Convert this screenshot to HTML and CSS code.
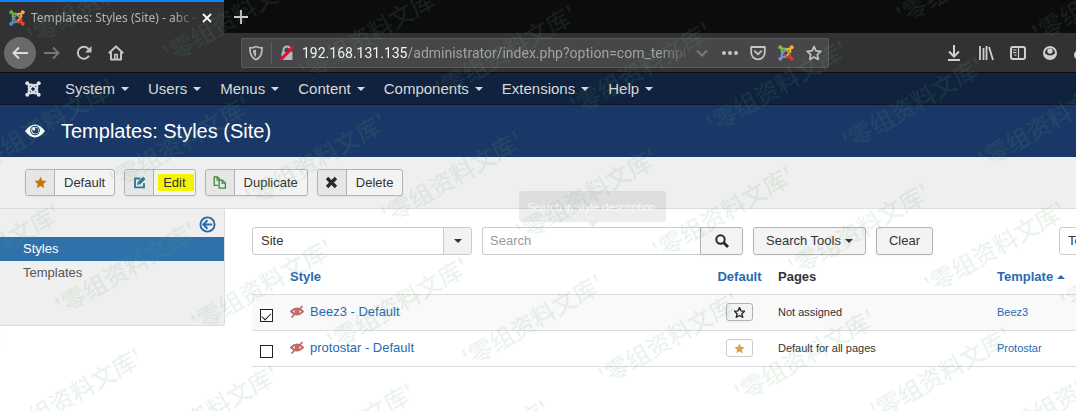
FILE: index.html
```html
<!DOCTYPE html>
<html lang="en">
<head>
<meta charset="utf-8">
<meta name="viewport" content="width=device-width, initial-scale=1">
<title>Templates: Styles (Site) - abc - Administration</title>
<link rel="stylesheet" href="styles.css">
</head>
<body>
<svg class="defs" aria-hidden="true">
  <defs>
    <g id="knot-arm">
      <circle cx="2.3" cy="2.3" r="2" fill="currentColor"/>
      <path d="M2.500 2.500L4.200 4.200Q6.300 2.800 8.200 4.700L11.400 7.900M4.200 4.200Q2.900 6.200 4.700 8.200" fill="none" stroke="currentColor" stroke-width="2"/>
    </g>
    <g id="star-shape">
      <path d="M8 .8l2.2 4.8 5.2.6-3.9 3.5 1.1 5.2L8 12.3l-4.6 2.6 1.1-5.2L.6 6.2l5.2-.6z"/>
    </g>
    <g id="eye-off" fill="none" stroke="#bd6a66" stroke-width="1.8">
      <path d="M1 6.500Q7 .5 13 6.500Q7 12.500 1 6.500z"/>
      <circle cx="7" cy="6.500" r="1.600"/>
      <path d="M1.500 12.500L12.500 1"/>
    </g>
    <text id="mark" class="mark-text" transform="rotate(-30)">'零组资料文库'</text>
    <g id="mark-row">
      <use href="#mark" x="-136" y="-18"/><use href="#mark"/><use href="#mark" x="136" y="18"/><use href="#mark" x="272" y="35"/><use href="#mark" x="408" y="53"/><use href="#mark" x="543" y="70"/><use href="#mark" x="679" y="88"/><use href="#mark" x="815" y="105"/><use href="#mark" x="951" y="123"/><use href="#mark" x="1087" y="140"/><use href="#mark" x="1223" y="158"/>
    </g>
  </defs>
</svg>

<header class="browser">
  <div class="tabs">
    <div class="tab">
      <svg class="i16" viewBox="0 0 16 16" aria-hidden="true">
        <g color="#6db33f"><use href="#knot-arm"/></g><g color="#f9a541" transform="rotate(90 8 8)"><use href="#knot-arm"/></g><g color="#f44321" transform="rotate(180 8 8)"><use href="#knot-arm"/></g><g color="#5091cd" transform="rotate(270 8 8)"><use href="#knot-arm"/></g>
      </svg>
      <span class="tab-title">Templates: Styles (Site) - abc -</span>
      <button class="plain tab-close" aria-label="Close tab"><svg class="i16" viewBox="0 0 16 16"><path d="M4 4l8 8M12 4l-8 8" stroke="#fff" stroke-width="1.8"/></svg></button>
    </div>
    <button class="plain new-tab" aria-label="New tab"><svg class="i16" viewBox="0 0 16 16"><path d="M8 1v14M1 8h14" stroke="#d0d0d0" stroke-width="1.8"/></svg></button>
  </div>
  <div class="navbar">
    <div class="nav-buttons">
      <button class="plain back" aria-label="Back"><svg class="i16" viewBox="0 0 16 16"><path d="M16 8H1.5M7 2.5L1.5 8 7 13.5" fill="none" stroke="#ddd" stroke-width="2"/></svg></button>
      <button class="plain tool" aria-label="Forward"><svg class="i16" viewBox="0 0 16 16"><path d="M0 8h14.5M9 2.5L14.5 8 9 13.5" fill="none" stroke="#77777a" stroke-width="2"/></svg></button>
      <button class="plain tool" aria-label="Reload"><svg class="i16" viewBox="0 0 16 16"><path d="M13 10.8A6 6 0 1 1 12.5 4" fill="none" stroke="#c4c4c4" stroke-width="2"/><path d="M15.5 1v6.5H9z" fill="#c4c4c4"/></svg></button>
      <button class="plain tool" aria-label="Home"><svg class="i16" viewBox="0 0 16 16"><path d="M.8 8.2L8 1.4l7.2 6.8M3 7v7.6h10V7" fill="none" stroke="#c4c4c4" stroke-width="2" stroke-linejoin="round"/><path d="M6.8 15V9.5h2.4V15" fill="none" stroke="#c4c4c4" stroke-width="1.6"/></svg></button>
    </div>
    <div class="space"></div>
    <div class="urlbar">
      <svg class="i16" viewBox="0 0 16 16" aria-hidden="true"><path d="M8 1.5Q11 3 14 2.8C14.3 8.5 12.5 12.8 8 14.8 3.500 12.800 1.700 8.500 2 2.800Q5 3 8 1.500z" fill="none" stroke="#b8b8ba" stroke-width="1.8"/><path d="M8 4.500v7.500Q5 10 5 5.200Q6.500 5 8 4.500z" fill="#b8b8ba"/></svg>
      <span class="url-rule"></span>
      <svg class="i16" viewBox="0 0 16 16" aria-hidden="true"><path d="M4.500 8V5a3.500 3.500 0 0 1 7 0v3" fill="none" stroke="#b8b8ba" stroke-width="2"/><rect x="2.500" y="7" width="11" height="8" rx="1.200" fill="#b8b8ba"/><path d="M1 15.500L14.500 1.500" stroke="#48484a" stroke-width="3"/><path d="M1.500 14.800L14.500 1.200" stroke="#ff0039" stroke-width="2"/></svg>
      <span class="url"><span class="host">192.168.131.135</span>/administrator/index.php?option=com_templ</span>
      <svg class="i16 chevron" viewBox="0 0 16 16" aria-hidden="true"><path d="M3 5.500l5 5 5-5" fill="none" stroke="#7c7c7e" stroke-width="2"/></svg>
      <svg class="i16" viewBox="0 0 16 16" aria-hidden="true" fill="#c4c4c6"><circle cx="2" cy="8" r="2"/><circle cx="8" cy="8" r="2"/><circle cx="14" cy="8" r="2"/></svg>
      <svg class="i16" viewBox="0 0 16 16" aria-hidden="true" fill="none" stroke="#c4c4c6" stroke-width="1.800" stroke-linejoin="round" stroke-linecap="round"><path d="M1.200 2h13.600v5.500a6.800 6.800 0 0 1-13.600 0z"/><path d="M4.800 6.200L8 9.300l3.200-3.100"/></svg>
      <svg class="i16" viewBox="0 0 16 16" aria-hidden="true">
        <g color="#7ac143"><use href="#knot-arm"/></g><g color="#f5b335" transform="rotate(90 8 8)"><use href="#knot-arm"/></g><g color="#d93a2f" transform="rotate(180 8 8)"><use href="#knot-arm"/></g><g color="#7a8fd0" transform="rotate(270 8 8)"><use href="#knot-arm"/></g>
      </svg>
      <svg class="i16" viewBox="0 0 16 16" aria-hidden="true"><path d="M8 1.500l2 4.300 4.800.6-3.500 3.300.9 4.700L8 12.100l-4.200 2.300.9-4.700L1.200 6.400 6 5.800z" fill="none" stroke="#c4c4c6" stroke-width="1.700" stroke-linejoin="round"/></svg>
    </div>
    <div class="space"></div>
    <div class="actions">
      <button class="plain tool" aria-label="Downloads"><svg class="i16" viewBox="0 0 16 16"><path d="M8 0v11M3 6.500l5 5 5-5M2 15h12" fill="none" stroke="#cfcfcf" stroke-width="2"/></svg></button>
      <button class="plain tool" aria-label="Library"><svg class="i16" viewBox="0 0 16 16"><path d="M2 1v14M5.500 3v12M8.500 1v14M11 2l4 13" fill="none" stroke="#cfcfcf" stroke-width="1.800"/></svg></button>
      <button class="plain tool" aria-label="Sidebars"><svg class="i16" viewBox="0 0 16 16"><rect x="1" y="2" width="14" height="12" rx="2" fill="none" stroke="#cfcfcf" stroke-width="2"/><path d="M8.500 2v12M3 5h3.500M3 7.500h3.500M4 10h2.500" stroke="#cfcfcf" stroke-width="1.200"/></svg></button>
      <button class="plain tool" aria-label="Account"><svg class="i16" viewBox="0 0 16 16"><circle cx="8" cy="8" r="6" fill="none" stroke="#cfcfcf" stroke-width="2"/><circle cx="8" cy="6" r="2.700" fill="#cfcfcf"/><path d="M3 8.500q5 4 10 0v3q-5 4.500-10 0z" fill="#cfcfcf"/></svg></button>
      <button class="plain tool" aria-label="Extension"><svg class="i16" viewBox="0 0 16 16"><circle cx="5" cy="10" r="5" fill="#cfcfcf"/></svg></button>
    </div>
  </div>
</header>

<nav class="menu">
  <a class="brand" href="#" aria-label="Control panel"><svg class="i16" viewBox="0 0 16 16" color="#dcdfe4"><use href="#knot-arm"/><use href="#knot-arm" transform="rotate(90 8 8)"/><use href="#knot-arm" transform="rotate(180 8 8)"/><use href="#knot-arm" transform="rotate(270 8 8)"/></svg></a>
  <a href="#">System</a><a href="#">Users</a><a href="#">Menus</a><a href="#">Content</a><a href="#">Components</a><a href="#">Extensions</a><a href="#">Help</a>
</nav>

<div class="title-bar">
  <svg class="eye" viewBox="0 0 20 14" aria-hidden="true"><path d="M0 7Q10-6 20 7Q10 20 0 7z" fill="#fff"/><circle cx="10" cy="6.500" r="4.800" fill="#1a3867"/><circle cx="10" cy="6.500" r="3.800" fill="#fff"/><circle cx="10.300" cy="6.500" r="3.100" fill="#1a3867"/><circle cx="8.800" cy="5" r="1.500" fill="#fff"/></svg>
  <h1>Templates: Styles (Site)</h1>
</div>

<div class="toolbar">
  <button class="task"><span class="task-icon"><svg viewBox="0 0 16 16" fill="#c67605"><use href="#star-shape"/></svg></span><span class="task-label">Default</span></button>
  <button class="task"><span class="task-icon"><svg viewBox="0 0 16 16"><path d="M9 3H2.500v11h11V9" fill="none" stroke="#2f7d92" stroke-width="2.400"/><path d="M5 11l1-4L12.500.8l3 3L9 10z" fill="#2f7d92"/></svg></span><span class="task-label"><span class="highlight">Edit</span></span></button>
  <button class="task"><span class="task-icon"><svg viewBox="0 0 16 16" fill="none" stroke="#3d8b40" stroke-width="1.600"><path d="M6 11.500H1.500V1.200h4L9 4.500"/><path d="M5.200 1.500V5H8.500"/><path d="M7.500 5h4l3.700 3.500V15H7.500z"/><path d="M11.200 5v3.700H15"/></svg></span><span class="task-label">Duplicate</span></button>
  <button class="task"><span class="task-icon"><svg viewBox="0 0 16 16"><path d="M2.500 2.500l11 11M13.500 2.500l-11 11" stroke="#292929" stroke-width="4.200"/></svg></span><span class="task-label">Delete</span></button>
</div>

<div class="body">
  <aside class="sidebar">
    <button class="plain collapse" aria-label="Hide the sidebar"><svg viewBox="0 0 18 18" fill="none" stroke="#2c6ba6" stroke-width="2"><circle cx="9" cy="9" r="7.500"/><path d="M14 9H5M9 4.500L4.500 9 9 13.500"/></svg></button>
    <a class="side-link active" href="#">Styles</a>
    <a class="side-link" href="#">Templates</a>
  </aside>
  <main class="content">
    <div class="filters">
      <span class="picker"><select aria-label="Client"><option>Site</option><option>Administrator</option></select></span>
      <div class="search">
        <input type="text" placeholder="Search" aria-label="Search">
        <button class="btn search-go" aria-label="Search"><svg viewBox="0 0 14 14" fill="none" stroke="#292929"><circle cx="5.500" cy="5.500" r="4.200" stroke-width="2"/><path d="M8.500 8.500L13 13" stroke-width="2.800"/></svg></button>
        <div class="tooltip" role="tooltip">Search in style description.</div>
      </div>
      <button class="btn tools">Search Tools</button>
      <button class="btn">Clear</button>
      <span class="picker ordering"><select aria-label="Sort by"><option>Template ascending</option></select></span>
    </div>
    <table>
      <colgroup><col class="c-check"><col><col class="c-default"><col class="c-pages"><col class="c-template"></colgroup>
      <thead>
        <tr><th></th><th><a href="#">Style</a></th><th class="center"><a href="#">Default</a></th><th>Pages</th><th><a class="sorted" href="#">Template</a></th></tr>
      </thead>
      <tbody>
        <tr class="odd"><td><input type="checkbox" checked aria-label="Select Beez3"></td><td><span class="style-name"><svg viewBox="0 0 14 14" aria-hidden="true"><use href="#eye-off"/></svg><a href="#">Beez3 - Default</a></span></td><td class="center"><button class="btn micro" aria-label="Set default"><svg viewBox="0 0 16 16" fill="none" stroke="#292929" stroke-width="2"><use href="#star-shape"/></svg></button></td><td class="small">Not assigned</td><td class="small"><a href="#">Beez3</a></td></tr>
        <tr><td><input type="checkbox" aria-label="Select protostar"></td><td><span class="style-name"><svg viewBox="0 0 14 14" aria-hidden="true"><use href="#eye-off"/></svg><a href="#">protostar - Default</a></span></td><td class="center"><button class="btn micro is-default" aria-label="Is default"><svg viewBox="0 0 16 16" fill="#dda450"><use href="#star-shape"/></svg></button></td><td class="small">Default for all pages</td><td class="small"><a href="#">Protostar</a></td></tr>
      </tbody>
    </table>
  </main>
</div>

<svg class="watermark" aria-hidden="true">
  <use href="#mark-row" x="88" y="-80"/>
  <use href="#mark-row" x="34" y="46"/>
  <use href="#mark-row" x="-20" y="172"/>
  <use href="#mark-row" x="-74" y="298"/>
  <use href="#mark-row" x="-128" y="424"/>
</svg>
</body>
</html>
```
FILE: styles.css
```css
* { box-sizing: border-box; }

body {
  margin: 0;
  background: #fff;
  color: #333;
  font: 13px/18px "Liberation Sans", Arial, sans-serif;
  overflow-x: hidden;
}

a { color: #2a69b0; text-decoration: none; }
button, input, select { font: inherit; color: inherit; margin: 0; }
svg { display: block; flex: none; }

.defs { position: absolute; width: 0; height: 0; }
.i16 { width: 16px; height: 16px; }
.plain { border: 0; padding: 0; background: none; display: flex; align-items: center; justify-content: center; }

/* Browser window */
.browser { background: #323234; font-family: "Noto Sans", "Open Sans", sans-serif; overflow: hidden; }
.tabs { display: flex; height: 33px; background: #0c0c0d; }
.tab {
  display: flex;
  align-items: center;
  width: 224px;
  padding: 0 9px;
  border-top: 2px solid #0a84ff;
  background: #323234;
}
.tab-title {
  flex: 1;
  margin-left: 6px;
  color: #b4b4b6;
  font-size: 12px;
  white-space: nowrap;
  mask-image: linear-gradient(to right, #000 85%, transparent);
}
.new-tab { width: 34px; }
.navbar { display: flex; align-items: center; height: 40px; border-bottom: 1px solid #0c0c0d; }
.nav-buttons { display: flex; align-items: center; padding-left: 4px; }
.back { width: 32px; height: 32px; border-radius: 50%; background: #6a6a6b; }
.tool { width: 32px; height: 32px; }
.space { flex: 0 0 109px; }
.urlbar {
  flex: 1;
  min-width: 0;
  display: flex;
  align-items: center;
  gap: 12px;
  height: 30px;
  padding: 0 6px;
  border: 1px solid #5a5a5c;
  border-radius: 2px;
  background: #474749;
}
.url-rule { width: 1px; height: 22px; margin: 0 -5px; background: #5f5f61; }
.url {
  flex: 1;
  min-width: 0;
  margin-left: -5px;
  color: #a2a2a4;
  font-family: Roboto, "Noto Sans", sans-serif;
  font-size: 14px;
  white-space: nowrap;
  overflow: hidden;
  mask-image: linear-gradient(to right, #000 92%, transparent);
}
.host { color: #f4f4f5; }
.chevron { margin-left: -8px; }
.actions { display: flex; margin-right: -22px; }

/* Administrator menu */
.menu {
  display: flex;
  align-items: center;
  height: 32px;
  padding: 1px 0 0 25px;
  border-bottom: 1px solid #0b182b;
  background: #10223e;
  font-size: 15px;
}
.menu a { display: flex; align-items: center; gap: 6px; margin-right: 19px; color: #d9d9d9; }
.menu a:not(.brand)::after,
.tools::after {
  content: "";
  border: 4px solid transparent;
  border-top-color: currentColor;
  border-bottom: 0;
}
.menu .brand { margin-right: 24px; }

.title-bar { display: flex; align-items: center; gap: 16px; height: 52px; padding-left: 25px; background: #1a3867; }
.title-bar h1 { margin: 0; color: #fff; font-size: 20px; font-weight: normal; line-height: 24px; }
.eye { width: 20px; height: 14px; }

/* Task toolbar */
.toolbar { display: flex; gap: 9px; padding: 12px 25px; border-bottom: 1px solid #ddd; background: #efefef; }
.task {
  display: flex;
  height: 27px;
  padding: 0;
  border: 1px solid #b3b3b3;
  border-radius: 3px;
  background: #f3f3f3;
  box-shadow: 0 1px 2px rgba(0, 0, 0, .05);
  line-height: 25px;
  overflow: hidden;
}
.task-icon { display: flex; align-items: center; justify-content: center; width: 29px; height: 25px; border-right: 1px solid #b3b3b3; background: #e6e6e6; }
.task-icon svg { width: 13px; height: 13px; }
.task-label { padding: 0 9px; }
.highlight { display: block; margin: 4px -8px 0 -5px; padding: 0 8px 0 5px; background: #f4f400; line-height: 17px; }

/* Page body */
.body { display: flex; align-items: flex-start; }
.sidebar {
  flex: 0 0 225px;
  display: flex;
  flex-direction: column;
  padding-bottom: 40px;
  border-right: 1px solid #ddd;
  border-bottom: 1px solid #ddd;
  border-radius: 0 0 3px 0;
  background: #efefef;
}
.collapse { align-self: flex-end; margin: 7px 8px 4px; }
.collapse svg { width: 17px; height: 17px; }
.side-link { padding: 3px 23px; color: #555; }
.side-link.active { background: #2f71ab; color: #fff; }
.content { flex: 1; min-width: 0; padding: 18px 0 0 27px; overflow-x: clip; }

.filters { display: flex; align-items: center; height: 28px; gap: 10px; }
.picker { position: relative; flex: 0 0 220px; height: 28px; }
.picker select {
  width: 100%;
  height: 28px;
  padding: 0 8px;
  border: 1px solid #ccc;
  border-radius: 3px;
  background: linear-gradient(to left, #f2f2f2 27px, #ccc 27px, #ccc 28px, #fff 28px);
  appearance: none;
}
.picker::after {
  content: "";
  position: absolute;
  top: 12px;
  right: 10px;
  border: 4px solid transparent;
  border-top-color: #333;
  border-bottom: 0;
  pointer-events: none;
}
.ordering { margin-left: 116px; }
.search { position: relative; display: flex; flex: 0 0 261px; height: 28px; }
.search input {
  flex: 1;
  min-width: 0;
  padding: 0 7px;
  border: 1px solid #ccc;
  border-right: 0;
  border-radius: 3px 0 0 3px;
  background: #fff;
}
.search input::placeholder { color: #999; }
.btn {
  display: flex;
  align-items: center;
  justify-content: center;
  height: 28px;
  padding: 0 12px;
  border: 1px solid #b3b3b3;
  border-radius: 3px;
  background: #f3f3f3;
  box-shadow: 0 1px 2px rgba(0, 0, 0, .05);
  white-space: nowrap;
}
.tools { gap: 4px; }
.search-go { width: 43px; border-radius: 0 3px 3px 0; }
.search-go svg { width: 14px; height: 14px; }
.tooltip {
  position: absolute;
  bottom: 33px;
  left: 37px;
  padding: 7px 8px 6px;
  border-radius: 3px;
  background: rgba(0, 0, 0, .07);
  color: #f8f8f8;
  font-size: 11px;
  white-space: nowrap;
}
.tooltip::after {
  content: "";
  position: absolute;
  top: 100%;
  left: 50%;
  margin-left: -5px;
  border: 5px solid transparent;
  border-top-color: rgba(0, 0, 0, .07);
  border-bottom: 0;
}

table { width: 100%; margin-top: 4px; border-collapse: collapse; table-layout: fixed; }
.c-check { width: 30px; }
.c-default { width: 61px; }
.c-pages { width: 219px; }
.c-template { width: 87px; }
th, td { height: 36px; padding: 0 8px; border-bottom: 1px solid #ddd; text-align: left; white-space: nowrap; }
th { height: 35px; padding-top: 2px; }
th a { color: #2a69b0; }
.center { padding-right: 0; padding-left: 0; text-align: center; }
.odd { background: #f9f9f9; }
.small { font-size: 11px; }
.sorted { display: flex; align-items: center; gap: 4px; }
.sorted::after { content: ""; border: 4px solid transparent; border-bottom-color: currentColor; border-top: 0; }
.style-name { display: flex; align-items: center; gap: 6px; }
.style-name svg { width: 14px; height: 14px; }
td input[type="checkbox"] {
  display: grid;
  place-items: center;
  width: 13px;
  height: 13px;
  margin-top: 6px;
  border: 1px solid #222;
  background: #fff;
  appearance: none;
}
td input[type="checkbox"]:checked::after {
  content: "";
  width: 8px;
  height: 4px;
  border: solid #222;
  border-width: 0 0 1px 1px;
  transform: rotate(-45deg);
}
.micro { width: 27px; height: 18px; margin: 0 auto; padding: 0; }
.micro svg { width: 11px; height: 11px; }
.is-default { border-color: #ccc; background: #fff; box-shadow: none; }

.watermark { position: fixed; inset: 0; width: 100%; height: 100%; pointer-events: none; }
.mark-text { font: 500 24px "Noto Sans CJK SC", sans-serif; fill: rgba(100, 170, 110, .13); }
```
